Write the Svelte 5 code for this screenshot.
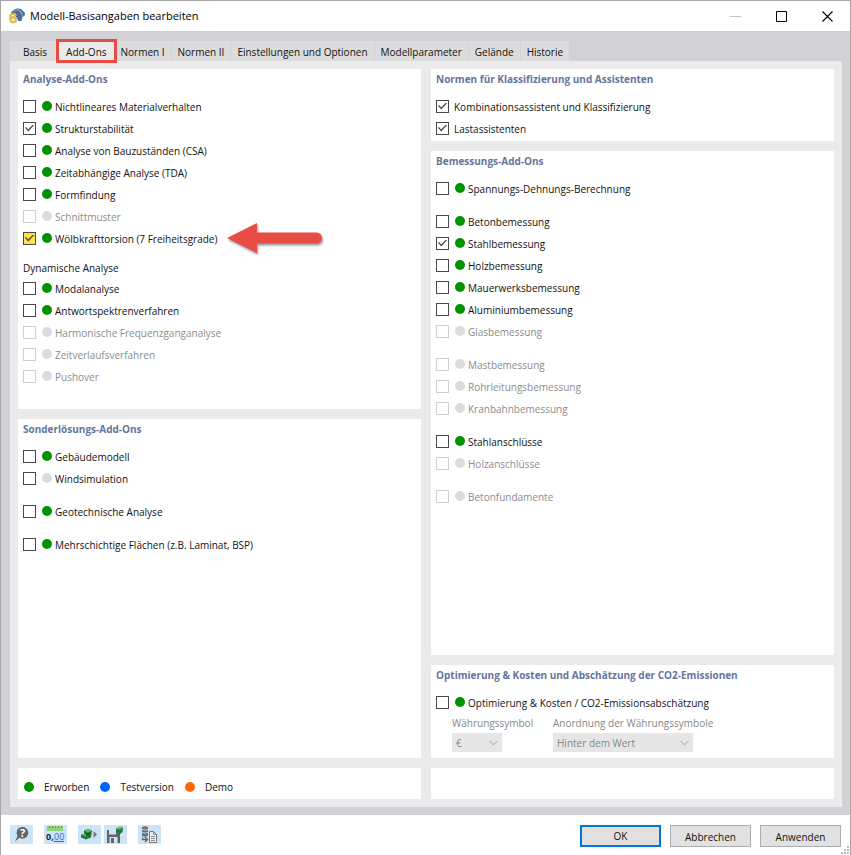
<script>
	const tabs = [
		'Basis',
		'Add-Ons',
		'Normen I',
		'Normen II',
		'Einstellungen und Optionen',
		'Modellparameter',
		'Gelände',
		'Historie'
	];
	let activeTab = $state('Add-Ons');

	// each inner array is a block of rows, blocks are separated by a gap
	const analysis = $state([
		[
			{ label: 'Nichtlineares Materialverhalten' },
			{ label: 'Strukturstabilität', checked: true },
			{ label: 'Analyse von Bauzuständen (CSA)' },
			{ label: 'Zeitabhängige Analyse (TDA)' },
			{ label: 'Formfindung' },
			{ label: 'Schnittmuster', disabled: true },
			{ label: 'Wölbkrafttorsion (7 Freiheitsgrade)', checked: true, marked: true }
		]
	]);
	const dynamic = $state([
		[
			{ label: 'Modalanalyse' },
			{ label: 'Antwortspektrenverfahren' },
			{ label: 'Harmonische Frequenzganganalyse', disabled: true },
			{ label: 'Zeitverlaufsverfahren', disabled: true },
			{ label: 'Pushover', disabled: true }
		]
	]);
	const special = $state([
		[{ label: 'Gebäudemodell' }, { label: 'Windsimulation', dot: 'none' }],
		[{ label: 'Geotechnische Analyse' }],
		[{ label: 'Mehrschichtige Flächen (z.B. Laminat, BSP)' }]
	]);
	const standards = $state([
		[
			{ label: 'Kombinationsassistent und Klassifizierung', checked: true, plain: true },
			{ label: 'Lastassistenten', checked: true, plain: true }
		]
	]);
	const design = $state([
		[{ label: 'Spannungs-Dehnungs-Berechnung' }],
		[
			{ label: 'Betonbemessung' },
			{ label: 'Stahlbemessung', checked: true },
			{ label: 'Holzbemessung' },
			{ label: 'Mauerwerksbemessung' },
			{ label: 'Aluminiumbemessung' },
			{ label: 'Glasbemessung', disabled: true }
		],
		[
			{ label: 'Mastbemessung', disabled: true },
			{ label: 'Rohrleitungsbemessung', disabled: true },
			{ label: 'Kranbahnbemessung', disabled: true }
		],
		[{ label: 'Stahlanschlüsse' }, { label: 'Holzanschlüsse', disabled: true }],
		[{ label: 'Betonfundamente', disabled: true }]
	]);
	const costs = $state([[{ label: 'Optimierung & Kosten / CO2-Emissionsabschätzung' }]]);
</script>

{#snippet rows(blocks)}
	<div class="blocks">
		{#each blocks as block}
			<div class="block">
				{#each block as item}
					<label class="row" class:disabled={item.disabled} class:marked={item.marked}>
						<input type="checkbox" bind:checked={item.checked} disabled={item.disabled} />
						{#if !item.plain}
							<span class="dot" class:none={item.disabled || item.dot === 'none'}></span>
						{/if}
						<span class="text">{item.label}</span>
						{#if item.marked}
							<svg class="arrow" width="100" height="36" viewBox="0 0 100 36" aria-hidden="true">
								<path d="M0 15 30 0V9.500H89.500a5.500 5.500 0 0 1 0 11H30V30Z" fill="#e94b45" />
							</svg>
						{/if}
					</label>
				{/each}
			</div>
		{/each}
	</div>
{/snippet}

{#snippet chevron()}
	<svg class="chevron" width="9" height="6" viewBox="0 0 9 6" aria-hidden="true">
		<path d="M.5 .8 4.500 4.800 8.500 .8" fill="none" stroke="#b4b4b4" stroke-width="1.100" />
	</svg>
{/snippet}

<div class="window">
	<header>
		<svg width="17" height="18" viewBox="0 0 17 18" aria-hidden="true">
			<path d="M2 6C4 2 8 .5 12 2l4 4-.5 3-2 .5-1 4.500h-3L6 8Z" fill="#4a6c9c" />
			<path d="M4 4.500C7 2 10 2.500 12 5l1.500 3.500" fill="none" stroke="#8da9c9" stroke-width="1.300" />
			<text x="0" y="16" font-size="15" font-weight="700" fill="#f2c82c" stroke="#b8922a" stroke-width=".3">6</text>
		</svg>
		<h1>Modell-Basisangaben bearbeiten</h1>
		<div class="controls">
			<button aria-label="Minimieren" disabled>
				<svg width="11" height="11"><path d="M0 5.500h11" stroke="#c4c4c4" /></svg>
			</button>
			<button aria-label="Maximieren">
				<svg width="11" height="11"><path d="M.5 .5h10v10H.5Z" fill="none" stroke="#000" /></svg>
			</button>
			<button aria-label="Schließen">
				<svg width="11" height="11"><path d="M.5 .5l10 10M10.500 .5l-10 10" stroke="#000" stroke-width="1.100" /></svg>
			</button>
		</div>
	</header>

	<main>
		<nav role="tablist">
			{#each tabs as tab}
				<button
					role="tab"
					class:active={tab === activeTab}
					aria-selected={tab === activeTab}
					onclick={() => (activeTab = tab)}>{tab}</button
				>
			{/each}
		</nav>

		<div class="page">
			<div class="columns">
				<div class="column">
					<section class="analysis">
						<h2>Analyse-Add-Ons</h2>
						{@render rows(analysis)}
						<h3>Dynamische Analyse</h3>
						{@render rows(dynamic)}
					</section>
					<section class="grow">
						<h2>Sonderlösungs-Add-Ons</h2>
						{@render rows(special)}
					</section>
				</div>
				<div class="column">
					<section>
						<h2>Normen für Klassifizierung und Assistenten</h2>
						{@render rows(standards)}
					</section>
					<section class="grow">
						<h2>Bemessungs-Add-Ons</h2>
						{@render rows(design)}
					</section>
					<section>
						<h2>Optimierung & Kosten und Abschätzung der CO2-Emissionen</h2>
						{@render rows(costs)}
						<div class="fields">
							<div class="field">
								<label for="currency">Währungssymbol</label>
								<div class="select small">
									<select id="currency" disabled><option>€</option></select>
									{@render chevron()}
								</div>
							</div>
							<div class="field">
								<label for="placement">Anordnung der Währungssymbole</label>
								<div class="select">
									<select id="placement" disabled><option>Hinter dem Wert</option></select>
									{@render chevron()}
								</div>
							</div>
						</div>
					</section>
				</div>
			</div>

			<div class="status">
				<section class="legend">
					<span><i class="dot"></i>Erworben</span>
					<span><i class="dot trial"></i>Testversion</span>
					<span><i class="dot demo"></i>Demo</span>
				</section>
				<section></section>
			</div>
		</div>
	</main>

	<footer>
		<div class="tools">
			<button aria-label="Hilfe">
				<svg width="23" height="19" viewBox="0 0 23 19">
					<path d="M12.500 2a5.800 5.800 0 1 1-3 10.800L5 16.500 7.500 11A5.800 5.800 0 0 1 12.500 2Z" fill="#646668" />
					<text x="10" y="12" font-size="11" font-weight="700" fill="#fff">?</text>
				</svg>
			</button>
			<button aria-label="Einheiten und Dezimalstellen">
				<svg width="23" height="19" viewBox="0 0 23 19">
					<path d="M3 1h16v5H3Z" fill="#8fd27d" />
					<path d="M5.500 1v2M8.500 1v2M11.500 1v2M14.500 1v2M17.500 1v2" stroke="#55a443" />
					<text x="2" y="15" font-size="9" font-weight="700" fill="#222">0,</text>
					<text x="10" y="15" font-size="9" fill="#2f66e8">00</text>
					<path d="M10 16.500h10" stroke="#2f66e8" />
				</svg>
			</button>
			<button aria-label="Vorlage laden">
				<svg width="23" height="19" viewBox="0 0 23 19">
					<path d="M6 5.500 10 4l4 1.500-1 7-5 2-5-2V9.500l3-.5Z" fill="#237a3c" />
					<path d="M6 5.500 10 4l4 1.500-4 2ZM3 9.500l3-1 3 2-1 1Z" fill="#5fb86b" />
					<path d="m8 9 4-1.500v2L8.500 11Z" fill="#154c27" />
					<path d="m15.500 6 3.500 3.500-3.500 3.500Z" fill="#76797c" />
				</svg>
			</button>
			<button aria-label="Als Vorlage speichern">
				<svg width="23" height="19" viewBox="0 0 23 19">
					<path d="M3 5h2v4.500h7V6l4 3v9H3Z" fill="#626568" />
					<path d="M6 5h5v3.500H6ZM5.500 12h8v6h-8Z" fill="#cfe5f7" />
					<path d="M7 13h3v5H7Z" fill="#626568" />
					<path d="m12 3.500 4-2 3 1-.5 4.500-2.500 2-2 1V8l-2-1Z" fill="#237a3c" />
					<path d="m12 3.500 4-2 3 1-3.500 2Z" fill="#6fc178" />
				</svg>
			</button>
			<button aria-label="Kommentar">
				<svg width="23" height="19" viewBox="0 0 23 19">
					<path d="M4 2q3-1.500 6 0v9q-3 1.500-6 0Z" fill="#707376" />
					<path d="M4 4.500q3 1 6 0M4 7.500q3 1 6 0" fill="none" stroke="#cce4f7" stroke-width=".8" />
					<path d="M4.500 12.500v2h4M7 12l2.500 2.500L7 17" fill="none" stroke="#606366" stroke-width="1.300" />
					<path d="M11.500 6.500h4l3 3v8h-7Z" fill="#eee" stroke="#77797c" />
					<path d="M13 11.500h4M13 13.500h4M13 15.500h4M15.500 6.500v3h3" fill="none" stroke="#77797c" stroke-width=".8" />
				</svg>
			</button>
		</div>
		<div class="actions">
			<button class="default">OK</button>
			<button>Abbrechen</button>
			<button>Anwenden</button>
		</div>
		<svg class="grip" width="8" height="8" viewBox="0 0 8 8" aria-hidden="true">
			<path d="M6 0h2v2H6ZM3 3h2v2H3ZM6 3h2v2H6ZM0 6h2v2H0ZM3 6h2v2H3ZM6 6h2v2H6Z" fill="#bbb" />
		</svg>
	</footer>
</div>

<style>
	:global(body) {
		background: #fff;
	}

	.window {
		box-sizing: border-box;
		display: flex;
		flex-direction: column;
		min-height: 100vh;
		border: 1px solid #a8a8a8;
		border-bottom: 0;
		background: #fff;
		color: #111;
		font-family: 'Open Sans', 'Noto Sans', sans-serif;
		font-size: 10px;
		line-height: 20px;
	}

	button,
	select {
		font: inherit;
		color: inherit;
	}

	h1,
	h2,
	h3 {
		margin: 0;
		font-size: inherit;
	}

	header {
		display: flex;
		align-items: center;
		height: 30px;
		padding-left: 8px;
		gap: 4px;
	}

	header text {
		font-family: 'Liberation Sans', sans-serif;
	}

	h1 {
		flex: 1;
		font-size: 11px;
		font-weight: 400;
		color: #000;
	}

	.controls {
		display: flex;
	}

	.controls button {
		display: grid;
		place-items: center;
		width: 46px;
		height: 30px;
		padding: 0;
		border: 0;
		background: none;
	}

	main {
		flex: 1;
		display: flex;
		flex-direction: column;
		padding: 10px 8px 8px 9px;
		background: #d2d1d6;
	}

	nav {
		display: flex;
	}

	nav button {
		height: 20px;
		padding: 2px 6px 0;
		border: 0;
		border-right: 1px solid #d2d1d6;
		background: #dcdcdc;
		line-height: 18px;
		white-space: nowrap;
	}

	nav button:first-child {
		padding: 2px 11px 0 13px;
		border-right: 0;
	}

	nav .active {
		position: relative;
		z-index: 1;
		padding: 2px 8px 0;
		border: 0;
		background: #ebebeb;
		outline: 3px solid #e94b45;
		outline-offset: -1px;
	}

	.page {
		flex: 1;
		display: flex;
		flex-direction: column;
		gap: 10px;
		padding: 8px;
		background: #ebebeb;
	}

	.columns,
	.status {
		display: grid;
		grid-template-columns: 1fr 1fr;
		gap: 10px;
	}

	.columns {
		flex: 1;
	}

	.column {
		display: flex;
		flex-direction: column;
		gap: 10px;
	}

	section {
		padding: 0 5px 2px;
		background: #fff;
	}

	.grow {
		flex: 1;
	}

	.analysis {
		padding-bottom: 22px;
	}

	h2 {
		margin-bottom: 6px;
		font-weight: 700;
		color: #65759b;
	}

	h3 {
		margin-top: 10px;
		font-weight: 400;
		line-height: 18px;
	}

	.blocks {
		display: flex;
		flex-direction: column;
		gap: 11px;
	}

	.row {
		position: relative;
		display: flex;
		align-items: center;
		height: 22px;
	}

	.text {
		padding-top: 2px;
	}

	.disabled {
		color: #8c8c8c;
	}

	input {
		appearance: none;
		display: grid;
		place-items: center;
		box-sizing: border-box;
		width: 13px;
		height: 13px;
		margin: 0 5px 0 0;
		border: 1px solid #484848;
		background: #fff;
	}

	input:disabled {
		border-color: #d0d0d0;
	}

	input:checked::before {
		content: '';
		width: 9px;
		height: 7px;
		background: #444;
		clip-path: polygon(0 48%, 11% 35%, 35% 70%, 90% 0, 100% 12%, 36% 100%);
	}

	.marked input {
		background: #ffe04a;
	}

	.dot {
		flex: none;
		width: 10px;
		height: 10px;
		margin: 0 3px 0 1px;
		border-radius: 50%;
		background: #009300;
	}

	.dot.none {
		background: #dcdce0;
	}

	.dot.trial {
		background: #0066ff;
	}

	.dot.demo {
		background: #ff6a00;
	}

	.arrow {
		position: absolute;
		left: 204px;
		top: -4px;
		filter: drop-shadow(1px 2px 1px rgba(0, 0, 0, 0.4));
	}

	.fields {
		display: grid;
		grid-template-columns: 80px 1fr;
		column-gap: 21px;
		padding: 0 0 4px 16px;
		color: #868686;
	}

	.field label {
		display: block;
		line-height: 20px;
		white-space: nowrap;
	}

	.select {
		display: grid;
		align-items: center;
		width: 140px;
	}

	.select.small {
		width: 50px;
	}

	select {
		grid-area: 1 / 1;
		appearance: none;
		height: 19px;
		padding: 0 16px 0 4px;
		border: 0;
		border-radius: 0;
		background: #e6e6e6;
		opacity: 1;
	}

	.chevron {
		grid-area: 1 / 1;
		justify-self: end;
		margin-right: 4px;
		pointer-events: none;
	}

	.status section {
		min-height: 29px;
	}

	.legend {
		display: flex;
		align-items: center;
		gap: 10px;
	}

	.legend span {
		display: flex;
		align-items: center;
		margin-top: 8px;
	}

	.legend .dot {
		margin-right: 10px;
	}

	footer {
		position: relative;
		display: flex;
		justify-content: space-between;
		box-sizing: border-box;
		height: 40px;
		padding: 10px 9px 0 9px;
	}

	.tools {
		display: flex;
		gap: 3px;
	}

	.tools button {
		height: 19px;
		margin-right: 8px;
		padding: 0;
		border: 0;
		background: #cce4f7;
	}

	.tools button:nth-child(3) {
		margin-right: 0;
	}

	.tools svg {
		display: block;
	}

	.actions {
		display: flex;
		gap: 9px;
	}

	.actions button {
		box-sizing: border-box;
		width: 81px;
		height: 22px;
		padding: 2px 0 0;
		border: 1px solid #adadad;
		background: #e1e1e1;
		line-height: 18px;
	}

	.actions .default {
		padding-top: 0;
		border: 2px solid #0078d7;
	}

	.grip {
		position: absolute;
		right: 1px;
		bottom: 1px;
	}
</style>
